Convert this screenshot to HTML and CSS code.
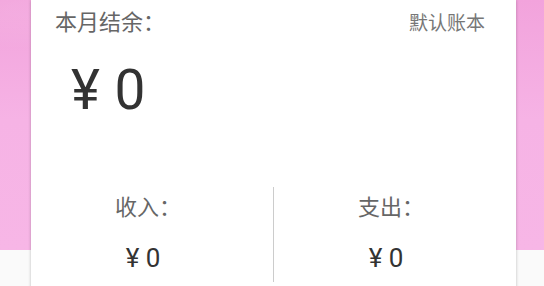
FILE: index.html
```html
<!DOCTYPE html>
<html>
<head>
    <link rel="stylesheet" href="styles.css">
</head>
<body>
    <div class="summary-card">
        <div class="card-head">
            <span class="head-title">本月结余：</span>
            <span class="book-name">默认账本</span>
        </div>
        <div class="balance">¥ 0</div>
        <div class="split">
            <div class="split-col">
                <div class="split-label">收入：</div>
                <div class="split-value">¥ 0</div>
            </div>
            <div class="split-col">
                <div class="split-label">支出：</div>
                <div class="split-value">¥ 0</div>
            </div>
        </div>
    </div>
</body>
</html>
```

FILE: styles.css
```css
body {
    margin: 0;
    height: 286px;
    overflow: hidden;
    font-family: Roboto, "Noto Sans CJK SC", sans-serif;
    background:
        radial-gradient(ellipse 420px 60px at 120px 10px, rgba(255,255,255,0.12), rgba(255,255,255,0) 70%),
        linear-gradient(to bottom, #f2a3dc 0, #f6b3e5 120px, #f7b6e6 250px, #fafafa 250px);
}
.summary-card {
    background: white;
    margin: 0 28px 0 31px;
    height: 300px;
    box-shadow: 0 0 3px rgba(0,0,0,0.25);
    padding: 0 31px 0 24px;
}
.card-head {
    display: flex;
    justify-content: space-between;
    align-items: baseline;
    padding-top: 4px;
}
.head-title {
    font-size: 22px;
    color: #666;
}
.book-name {
    font-size: 19px;
    color: #777;
}
.balance {
    font-size: 55px;
    color: #333;
    margin: 24px 0 0 16px;
    line-height: 60px;
    word-spacing: 1px;
}
.split {
    display: flex;
    margin: 67px -31px 0 -24px;
}
.split-col {
    flex: 1;
    text-align: center;
    padding-right: 8px;
    height: 95px;
}
.split-col + .split-col {
    border-left: 1px solid #ccc;
}
.split-label {
    font-size: 22px;
    color: #666;
    margin-top: 2px;
}
.split-value {
    font-size: 26px;
    color: #333;
    margin-top: 22px;
    padding-right: 10px;
}
```
